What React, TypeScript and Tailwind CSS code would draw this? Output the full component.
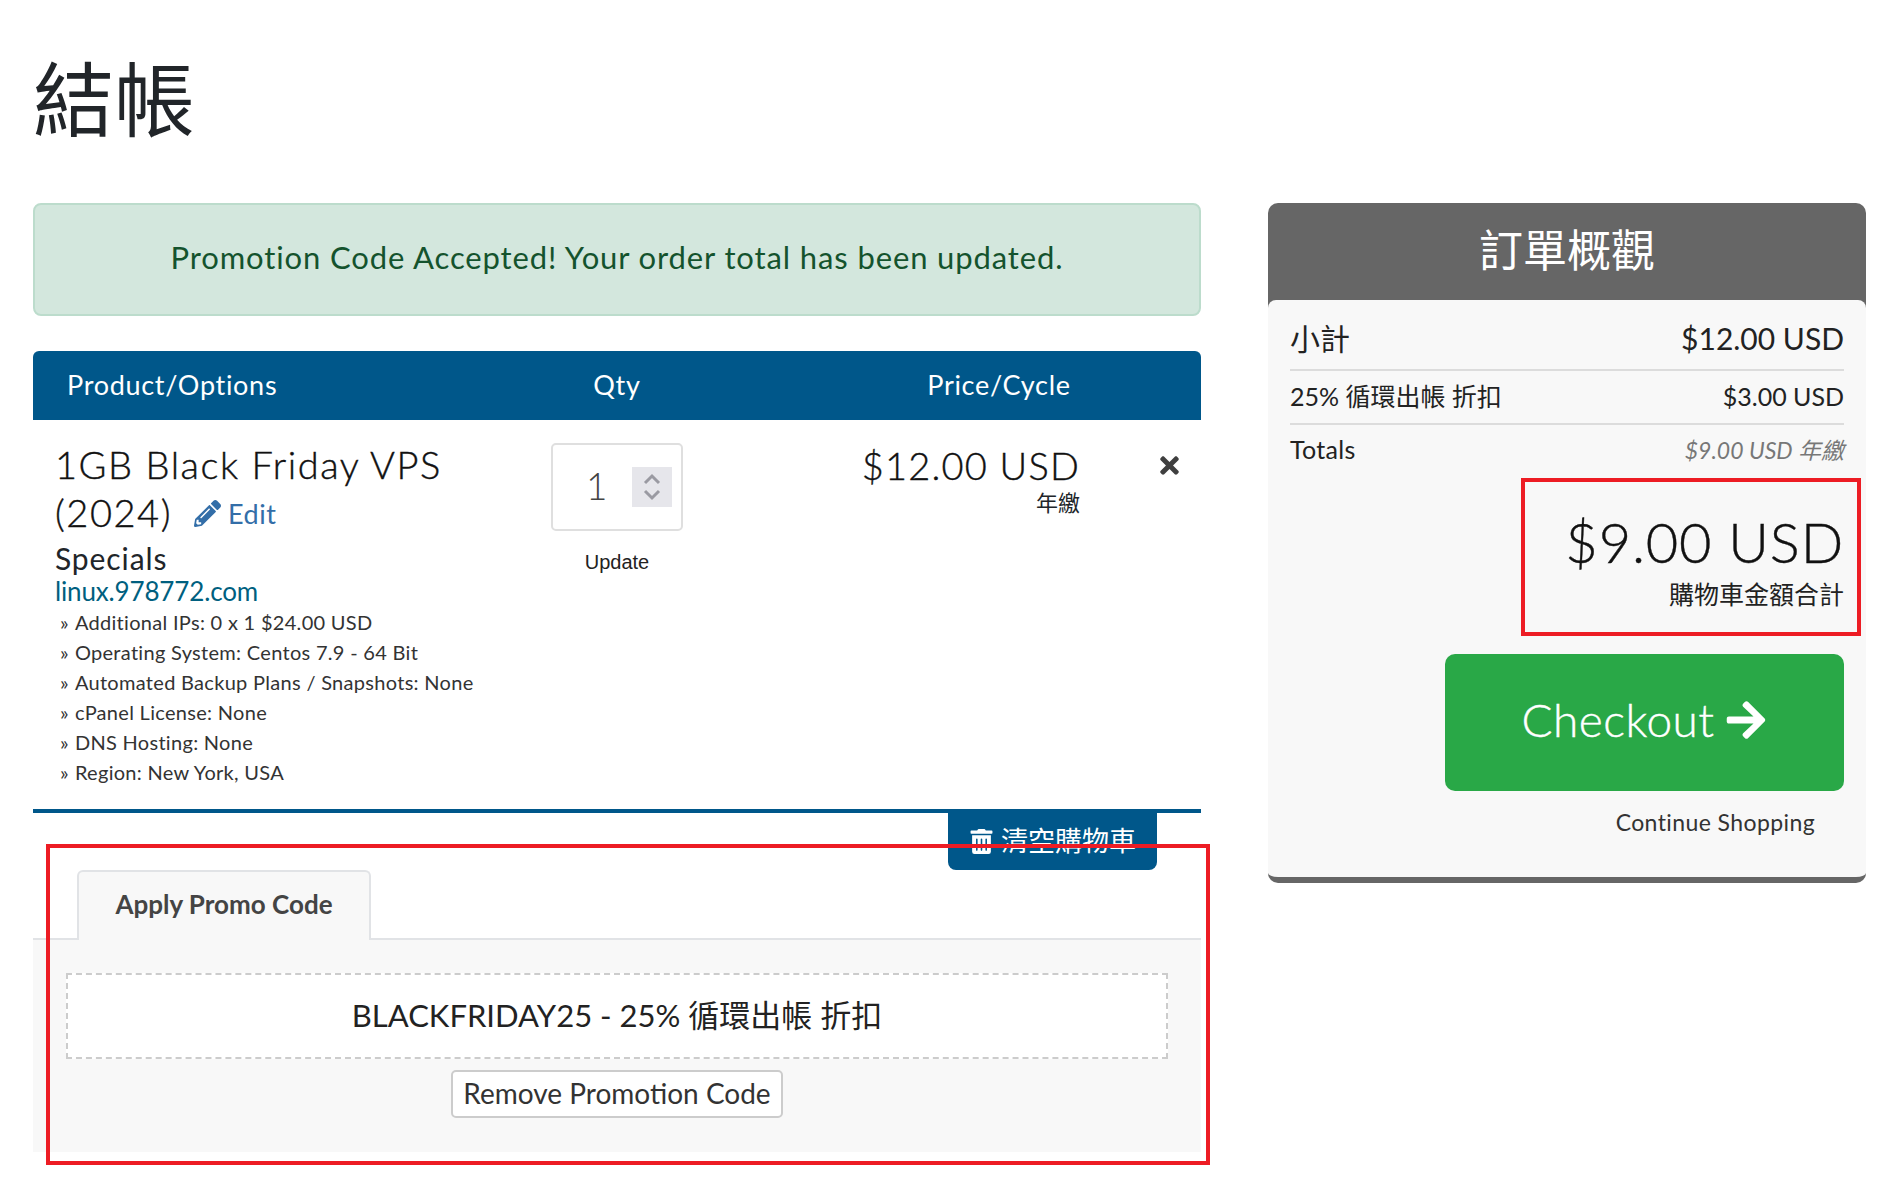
import { FaArrowRight, FaPencilAlt, FaTimes, FaTrashAlt } from "react-icons/fa";

const options = [
  "Additional IPs: 0 x 1 $24.00 USD",
  "Operating System: Centos 7.9 - 64 Bit",
  "Automated Backup Plans / Snapshots: None",
  "cPanel License: None",
  "DNS Hosting: None",
  "Region: New York, USA",
];

function CartHeader() {
  return (
    <div className="flex h-[69px] items-center rounded-t-[6px] bg-[#00578a] text-[27px] tracking-[0.7px] text-white">
      <div className="w-[467px] pl-[34px]">Product/Options</div>
      <div className="w-[234px] text-center">Qty</div>
      <div className="w-[467px] pl-[63px] text-center">Price/Cycle</div>
    </div>
  );
}

function CartItem() {
  return (
    <div className="flex h-[393px] border-b-4 border-[#00578a] text-[#212529]">
      <div className="w-[467px] pl-[22px] pt-[20px]">
        <div className="text-[38px] font-light leading-[48px] tracking-[1.55px] text-[#111] [-webkit-text-stroke:0.4px]">
          <div>1GB Black Friday VPS</div>
          <div>
            (2024)
            <span className="ml-[22px] inline-flex items-center gap-[7px] text-[27px] font-normal tracking-[0.5px] text-[#336ea8] [-webkit-text-stroke:0px]">
              <FaPencilAlt className="text-[27px]" />
              Edit
            </span>
          </div>
        </div>
        <div className="mt-[2px] text-[30px] leading-[36px] tracking-[0.9px]">Specials</div>
        <div className="-mt-[1px] text-[26px] leading-[32px] tracking-[-0.15px] text-[#005f7f]">linux.978772.com</div>
        <div className="pl-[5px] text-[20px] leading-[30px] tracking-[0.3px] text-[#333]">
          {options.map((o) => (
            <div key={o} className="flex gap-[6px]">
              <span>»</span>
              {o}
            </div>
          ))}
        </div>
      </div>
      <div className="flex w-[234px] flex-col items-center pt-[23px]">
        <div className="flex h-[88px] w-[132px] items-center justify-between rounded-[5px] border-2 border-[#dfdfdf] pl-[33px] pr-[9px]">
          <span className="pb-[3px] text-[37px] font-light text-[#444]">1</span>
          <span className="flex h-[40px] w-[40px] flex-col items-center justify-center bg-[#e6e6eb]">
            <svg viewBox="0 0 20 28" className="h-[28px] w-[20px]" fill="none" stroke="#9a9aa2" strokeWidth="3">
              <path d="M3 10l7-7 7 7M3 18l7 7 7-7" />
            </svg>
          </span>
        </div>
        <div className="mt-[19px] font-['Liberation_Sans'] text-[20px] leading-[24px] text-[#222]">Update</div>
      </div>
      <div className="flex w-[467px] items-start pt-[23px]">
        <div className="w-[346px] text-right">
          <div className="text-[38px] font-light leading-[44px] tracking-[1.2px] text-[#111] [-webkit-text-stroke:0.4px]">$12.00 USD</div>
          <div className="mt-[2px] text-[22px] leading-[28px]">年繳</div>
        </div>
        <FaTimes className="ml-[76px] mt-[9px] text-[27px] text-[#3f3f3f]" />
      </div>
    </div>
  );
}

function PromoPanel() {
  return (
    <div>
      <div className="flex justify-end pr-[44px]">
        <div className="flex h-[57px] w-[209px] items-center justify-center gap-[7px] rounded-b-[8px] bg-[#00578a] text-[27px] text-white">
          <FaTrashAlt className="text-[25px]" />
          清空購物車
        </div>
      </div>
      <div className="flex h-[70px] border-b-2 border-[#e1e3e6] pl-[44px]">
        <div className="-mb-[2px] flex w-[294px] items-center justify-center rounded-t-[6px] border-2 border-b-0 border-[#e1e3e6] bg-[#f8f8f8] pb-[4px] text-[26px] font-bold text-[#444]">
          Apply Promo Code
        </div>
      </div>
      <div className="flex h-[212px] flex-col items-center bg-[#f8f8f8] px-[33px] pt-[33px]">
        <div className="flex h-[86px] w-full items-center justify-center border-2 border-dashed border-[#ccc] bg-white pb-[2px] text-[31px] text-[#222]">
          BLACKFRIDAY25 - 25% 循環出帳 折扣
        </div>
        <div className="mt-[11px] flex h-[48px] w-[332px] items-center justify-center rounded-[5px] border-2 border-[#ccc] bg-white pb-[2px] text-[28px] text-[#333]">
          Remove Promotion Code
        </div>
      </div>
    </div>
  );
}

function OrderSummary() {
  return (
    <div className="w-[598px] self-start overflow-hidden rounded-[10px] border-b-[6px] border-[#666] bg-[#666]">
      <div className="flex h-[97px] items-center justify-center pb-[3px] text-[44px] text-white">訂單概觀</div>
      <div className="h-[577px] rounded-t-[8px] bg-[#f8f8f8] px-[22px] text-[#222]">
        <div className="flex h-[71px] items-center justify-between border-b-2 border-[#dcdcdc] pt-[7px]">
          <span className="text-[30px]">小計</span>
          <span className="text-[30px]">$12.00 USD</span>
        </div>
        <div className="flex h-[54px] items-center justify-between border-b-2 border-[#dcdcdc] pb-[1px] text-[25px]">
          <span>25% 循環出帳 折扣</span>
          <span>$3.00 USD</span>
        </div>
        <div className="flex h-[52px] items-center justify-between pb-[2px] text-[25px]">
          <span className="tracking-[0.3px]">Totals</span>
          <span className="text-[23px] italic text-[#777]">$9.00 USD 年繳</span>
        </div>
        <div className="mt-[31px] text-right">
          <div className="text-[56px] font-light leading-[68px] tracking-[0.8px] text-[#111] [-webkit-text-stroke:0.4px]">$9.00 USD</div>
          <div className="mt-[1px] text-[25px] leading-[34px]">購物車金額合計</div>
        </div>
        <div className="ml-[155px] mt-[43px] flex h-[137px] items-center justify-center gap-[9px] rounded-[10px] bg-[#29a847] pb-[6px] text-[46px] font-light tracking-[0.5px] text-white [-webkit-text-stroke:0.4px]">
          Checkout
          <FaArrowRight className="text-[44px]" />
        </div>
        <div className="mt-[15px] pr-[29px] text-right text-[23px] leading-[32px] tracking-[0.4px] text-[#333]">Continue Shopping</div>
      </div>
    </div>
  );
}

export default function App() {
  return (
    <div className="relative h-[1196px] w-[1900px] overflow-hidden bg-white pl-[33px] font-['Lato','Noto_Sans_CJK_TC',sans-serif]">
      <h1 className="h-[203px] pt-[49px] text-[81px] leading-[100px] text-[#212529]">結帳</h1>
      <div className="flex gap-[67px]">
        <div className="w-[1168px]">
          <div className="flex h-[113px] items-center justify-center rounded-[8px] border-2 border-[#bcdccc] bg-[#d3e7dd] pb-[5px] text-[31px] tracking-[0.88px] text-[#14532d]">
            Promotion Code Accepted! Your order total has been updated.
          </div>
          <div className="mt-[35px]">
            <CartHeader />
            <CartItem />
            <PromoPanel />
          </div>
        </div>
        <OrderSummary />
      </div>
      {/* annotation boxes drawn over the screenshot */}
      <div className="absolute left-[46px] top-[844px] h-[321px] w-[1164px] border-4 border-[#ed1c24]" />
      <div className="absolute left-[1521px] top-[478px] h-[158px] w-[340px] border-4 border-[#ed1c24]" />
    </div>
  );
}
